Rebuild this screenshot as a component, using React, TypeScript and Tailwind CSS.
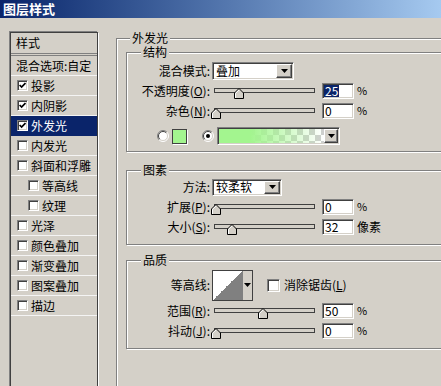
import React from "react";

const sunken =
  "border border-t-[#808080] border-l-[#808080] border-b-white border-r-white shadow-[inset_1px_1px_0_#404040,inset_-1px_-1px_0_#d4d0c8] bg-white";
const raised =
  "border border-t-white border-l-white border-b-[#404040] border-r-[#404040] shadow-[inset_-1px_-1px_0_#808080,inset_1px_1px_0_#d4d0c8] bg-[#d4d0c8]";
const etched = "border border-[#808080] shadow-[inset_1px_1px_0_#fff,1px_1px_0_#fff]";

function Arrow() {
  return (
    <svg width="7" height="4" viewBox="0 0 7 4">
      <polygon points="0,0 7,0 3.5,4" fill="#000" />
    </svg>
  );
}

function CheckBox({ checked, size }: { checked?: boolean; size: "sm" | "md" }) {
  return (
    <div
      className={`${sunken} ${size === "sm" ? "w-[11px] h-[11px]" : "w-[13px] h-[13px]"} flex items-center justify-center shrink-0`}
    >
      {checked && (
        <svg width="7" height="7" viewBox="0 0 7 7">
          <path d="M0.6 3 L2.6 5.1 L6.5 1" stroke="#000" strokeWidth="1.7" fill="none" />
        </svg>
      )}
    </div>
  );
}

function Radio({ checked }: { checked?: boolean }) {
  return (
    <svg width="12" height="12" viewBox="0 0 12 12">
      <circle cx="6" cy="6" r="5" fill="#fff" />
      <path d="M2.1 9.9 A5.5 5.5 0 0 1 9.9 2.1" stroke="#808080" fill="none" />
      <path d="M9.9 2.1 A5.5 5.5 0 0 1 2.1 9.9" stroke="#fff" fill="none" />
      <path d="M2.8 9.2 A4.5 4.5 0 0 1 9.2 2.8" stroke="#404040" fill="none" />
      <path d="M9.2 2.8 A4.5 4.5 0 0 1 2.8 9.2" stroke="#d4d0c8" fill="none" />
      {checked && <circle cx="6" cy="6" r="2" fill="#000" />}
    </svg>
  );
}

function Thumb({ left }: { left: number }) {
  return (
    <svg className="absolute top-0" style={{ left }} width="10" height="11" viewBox="0 0 10 11">
      <polygon points="0.5,5 5,0.5 9.5,5 9.5,10.5 0.5,10.5" fill="#d4d0c8" stroke="#000" />
      <polyline points="1.5,10 1.5,5.4 5,1.9" stroke="#fff" fill="none" />
    </svg>
  );
}

function Slider({ pct }: { pct: number }) {
  const left = -3 + pct * 0.93;
  return (
    <div className="relative w-[101px] h-[11px] ml-[4px] self-start mt-[7px] shrink-0">
      <div className="h-[5px] border border-[#404040] bg-[#d4d0c8]" />
      <Thumb left={left} />
    </div>
  );
}

function Num({ v, sel }: { v: string; sel?: boolean }) {
  return (
    <div className={`${sunken} w-[32px] h-[16px] p-[1px] ml-[7px] flex items-center shrink-0`}>
      <span className={sel ? "bg-[#0a246a] text-white pl-[1px] pr-[1px] leading-[12px]" : "pl-[1px] leading-[12px]"}>{v}</span>
    </div>
  );
}

function Label({ children }: { children: React.ReactNode }) {
  return <div className="w-[83px] shrink-0 text-right leading-[14px] whitespace-nowrap">{children}</div>;
}

function Select({ text, w, h }: { text: string; w: string; h: string }) {
  return (
    <div className={`${sunken} ${w} ${h} ml-[2px] p-[1px] flex shrink-0`}>
      <div className="flex-1 pl-[2px] flex items-center leading-[14px]">{text}</div>
      <div className={`${raised} w-[16px] h-full flex items-center justify-center`}>
        <Arrow />
      </div>
    </div>
  );
}

function SliderRow({
  label,
  pct,
  v,
  sel,
  unit,
}: {
  label: React.ReactNode;
  pct: number;
  v: string;
  sel?: boolean;
  unit: string;
}) {
  return (
    <div className="flex h-[20px] items-center">
      <Label>{label}</Label>
      <Slider pct={pct} />
      <Num v={v} sel={sel} />
      <span className={unit === "%" ? "ml-[3px] text-[11px] leading-[12px] -mt-[3px]" : "ml-[3px] leading-[14px]"}>{unit}</span>
    </div>
  );
}

function Group({ label, className, children }: { label: string; className: string; children: React.ReactNode }) {
  return (
    <div className={`${etched} w-[330px] ${className}`}>
      <div className="-mt-[7px] ml-[14px] px-[2px] w-fit h-[12px] leading-[12px] bg-[#d4d0c8]">{label}</div>
      {children}
    </div>
  );
}

const listItems: { t: string; c: boolean; indent?: boolean; sel?: boolean }[] = [
  { t: "投影", c: true },
  { t: "内阴影", c: true },
  { t: "外发光", c: true, sel: true },
  { t: "内发光", c: false },
  { t: "斜面和浮雕", c: false },
  { t: "等高线", c: false, indent: true },
  { t: "纹理", c: false, indent: true },
  { t: "光泽", c: false },
  { t: "颜色叠加", c: false },
  { t: "渐变叠加", c: false },
  { t: "图案叠加", c: false },
  { t: "描边", c: false },
];

export default function App() {
  return (
    <div className="w-[441px] h-[386px] overflow-hidden bg-[#d4d0c8] text-[12px] text-black font-['Noto_Sans_CJK_SC','Noto_Sans',sans-serif]">
      <div className="h-[18px] bg-linear-to-r from-[#0a246a] to-[#a6caf0] text-white font-bold text-[13px] leading-[18px] pl-[3px]">
        图层样式
      </div>
      <div className="flex">
        {/* left list */}
        <div className="ml-[10px] mt-[14px] w-[88px] h-[380px] shrink-0 border border-[#404040] shadow-[-1px_-1px_0_#808080,1px_1px_0_#fff]">
          <div className="h-[20px] pl-[5px] flex items-center leading-[14px]">样式</div>
          <div className="h-[3px] border-y border-[#808080]" />
          <div className="h-[20px] pl-[5px] flex items-center leading-[14px] border-b border-[#f4f4f4]">混合选项:自定</div>
          {listItems.map((it) => (
            <div
              key={it.t}
              className={`h-[20px] flex items-center gap-[3px] leading-[14px] border-b ${
                it.sel ? "bg-[#0a246a] text-white border-[#0a246a]" : "border-[#f4f4f4]"
              } ${it.indent ? "pl-[17px]" : "pl-[6px]"}`}
            >
              <CheckBox checked={it.c} size="sm" />
              <span>{it.t}</span>
            </div>
          ))}
        </div>

        {/* right outer group */}
        <div className={`ml-[18px] mt-[20px] w-[340px] h-[380px] shrink-0 ${etched}`}>
          <div className="-mt-[7px] ml-[13px] px-[2px] w-fit h-[12px] leading-[12px] bg-[#d4d0c8]">外发光</div>
          <div className="ml-[9px] mt-[8px] flex flex-col">
            <Group label="结构" className="pb-[5px]">
              <div className="mt-[3px] flex h-[20px] items-center">
                <Label>混合模式:</Label>
                <Select text="叠加" w="w-[82px]" h="h-[18px]" />
              </div>
              <SliderRow label={<>不透明度(<u>O</u>):</>} pct={25} v="25" sel unit="%" />
              <SliderRow label={<>杂色(<u>N</u>):</>} pct={0} v="0" unit="%" />
              <div className="mt-[5px] flex h-[20px] items-center">
                <div className="ml-[30px] flex">
                  <Radio />
                </div>
                <div className="ml-[3px] w-[15px] h-[15px] border border-[#404040] bg-[#a3f58f] shadow-[1px_1px_0_#fff]" />
                <div className="ml-[15px] flex">
                  <Radio checked />
                </div>
                <div className={`${sunken} ml-[3px] w-[123px] h-[18px] p-[1px] flex`}>
                  <div className="flex-1 bg-[image:linear-gradient(to_right,#a3f58f_30%,rgba(163,245,143,0)_100%),conic-gradient(#cfcfcf_25%,#fff_0_50%,#cfcfcf_0_75%,#fff_0)] bg-[length:100%_100%,12px_12px]" />
                  <div className={`${raised} w-[14px] h-full flex items-center justify-center`}>
                    <Arrow />
                  </div>
                </div>
              </div>
            </Group>

            <Group label="图素" className="mt-[18px] pb-[7px]">
              <div className="mt-[1px] flex h-[20px] items-center">
                <Label>方法:</Label>
                <Select text="较柔软" w="w-[70px]" h="h-[17px]" />
              </div>
              <SliderRow label={<>扩展(<u>P</u>):</>} pct={0} v="0" unit="%" />
              <SliderRow label={<>大小(<u>S</u>):</>} pct={17} v="32" unit="像素" />
            </Group>

            <Group label="品质" className="mt-[15px] pb-[7px]">
              <div className="mt-[3px] flex h-[32px] items-center">
                <Label>等高线:</Label>
                <div className="ml-[2px] w-[41px] h-[31px] flex border border-[#404040] bg-white shrink-0">
                  <div className="w-[29px] h-full bg-[image:linear-gradient(to_bottom_right,#fff_50%,#808080_50%)]" />
                  <div className="flex-1 border-l border-[#808080] bg-[#d4d0c8] flex items-center justify-center">
                    <Arrow />
                  </div>
                </div>
                <div className="ml-[14px]">
                  <CheckBox size="md" />
                </div>
                <span className="ml-[4px] leading-[14px]">
                  消除锯齿(<u>L</u>)
                </span>
              </div>
              <SliderRow label={<>范围(<u>R</u>):</>} pct={50} v="50" unit="%" />
              <SliderRow label={<>抖动(<u>J</u>):</>} pct={0} v="0" unit="%" />
            </Group>
          </div>
        </div>
      </div>
    </div>
  );
}
